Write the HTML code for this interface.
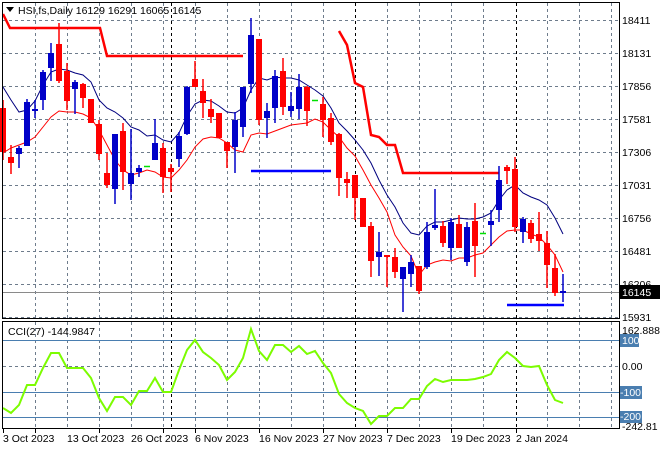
<!DOCTYPE html>
<html><head><meta charset="utf-8"><style>
body{margin:0;background:#fff;width:660px;height:450px;overflow:hidden}
svg{display:block;font-family:"Liberation Sans",sans-serif;font-size:10.5px}
</style></head><body>
<svg width="660" height="450" viewBox="0 0 660 450" xmlns="http://www.w3.org/2000/svg">
<rect width="660" height="450" fill="#fff"/>
<g stroke="#6e7c8c" stroke-width="1" stroke-dasharray="3,3" fill="none">
<path d="M3 20.5H619M3 53.5H619M3 86.5H619M3 119.5H619M3 152.5H619M3 185.5H619M3 218.5H619M3 251.5H619M3 284.5H619M3 317.5H619"/>
<path d="M35.5 3V318M67.5 3V318M99.5 3V318M131.5 3V318M163.5 3V318M195.5 3V318M227.5 3V318M259.5 3V318M291.5 3V318M323.5 3V318M387.5 3V318M419.5 3V318M451.5 3V318M483.5 3V318M547.5 3V318M579.5 3V318M611.5 3V318"/>
<path d="M35.5 322V428M67.5 322V428M99.5 322V428M131.5 322V428M163.5 322V428M195.5 322V428M227.5 322V428M259.5 322V428M291.5 322V428M323.5 322V428M387.5 322V428M419.5 322V428M451.5 322V428M483.5 322V428M547.5 322V428M579.5 322V428M611.5 322V428M3 366.5H619"/>
</g>
<g stroke="#000" stroke-dasharray="3,3"><path d="M171.5 3V318M355.5 3V318M516.5 3V318M171.5 322V428M355.5 322V428M516.5 322V428"/></g>
<path d="M3 292.5H619" stroke="#8a8a8a"/>
<g stroke="#4a7eb0"><path d="M3 340.5H619M3 392.5H619M3 417.5H619"/></g>
<polyline fill="none" stroke="#f00" stroke-width="2.5" points="3,14 10,28 100,28 107,56 243,56"/>
<polyline fill="none" stroke="#f00" stroke-width="2.5" points="339,31 347,45 355,83 363,87 371,135 379,137 387,145 395,145 403,173 499,173"/>
<path d="M251 171H331M507 305H564" stroke="#00f" stroke-width="2.5"/>
<polyline fill="none" stroke="#00007f" stroke-width="1" points="3,87 11,100 19,112 27,110 35,101 43,85 51,72 59,69 67,70 75,73 83,75 91,82 99,100 107,108 115,112 123,118 131,127 139,130 147,136 155,135 163,140 171,142 179,133 187,116 195,104 203,100 211,101 219,106 227,112 235,113 243,108 251,90 259,78 267,80 275,77 283,78 291,78 299,80 307,85 315,90 323,96 331,108 339,123 347,131 355,140 363,150 371,163 379,180 387,195 395,207 403,223 411,233 419,235 427,226 435,222 443,222 451,220 459,218 467,219 475,219 483,217 491,213 499,200 507,190 515,185 523,193 531,197 539,200 547,205 555,218 563,234"/>
<polyline fill="none" stroke="#f00" stroke-width="1" points="3,153 11,148 19,145 27,142 35,137 43,127 51,117 59,111 67,112 75,112 83,114 91,118 99,130 107,145 115,160 123,170 131,175 139,173 147,170 155,172 163,177 171,178 179,170 187,160 195,147 203,139 211,137 219,138 227,143 235,150 243,152 251,135 259,133 267,134 275,131 283,128 291,125 299,124 307,123 315,119 323,122 331,130 339,137 347,148 355,156 363,170 371,185 379,198 387,212 395,235 403,247 411,256 419,275 427,265 435,262 443,260 451,261 459,258 467,258 475,255 483,253 491,245 499,237 507,231 515,230 523,230 531,234 539,237 547,245 555,255 563,272"/>
<!-- red candles -->
<path stroke="#f00" stroke-width="1.5" fill="none" d="M3 100V160M11 145V174M59 23V83M67 63V110M83 83V108M91 99V123M99 120V160M107 153V188M123 123V190M163 143V193M171 164V192M195 61V87M203 79V118M211 99V123M219 113V138M227 142V168M259 39V125M283 58V115M307 86V126M323 97V137M331 113V145M339 133V196M347 172V198M355 175V220M363 198V227M371 222V277M387 255V287M395 248V278M419 266V294M443 221V247M459 215V248M475 203V277M507 165V184M515 157V232M531 220V243M539 212V251M547 231V288M555 254V296"/>
<path stroke="#f00" stroke-width="6" fill="none" d="M3 108V152M11 157V163M59 44V81M67 71V101M83 84V98M91 99V123M99 124V154M107 173V185M123 131V172M163 148V177M171 168V172M195 79V87M203 91V103M211 109V117M219 113V138M227 142V151M259 39V120M283 71V107M307 87V111M323 104V120M331 118V142M339 134V178M347 179V183M355 175V198M363 198V227M371 226V261M387 255V257M395 257V272M419 266V291M443 226V243M459 224V248M475 221V246M507 167V171M515 169V227M531 223V239M539 234V241M547 243V265M555 268V293"/>
<!-- blue candles -->
<path stroke="#0000c8" stroke-width="1.5" fill="none" d="M19 146V168M27 99V146M35 100V118M43 70V110M51 43V81M75 80V114M115 134V204M131 129V200M139 165V177M155 119V160M179 132V167M187 86V135M235 112V173M243 87V137M251 18V93M267 103V138M275 70V123M291 92V117M299 74V119M379 232V276M403 267V312M411 255V287M427 222V269M435 189V230M451 218V260M467 222V266M491 210V246M499 166V222M523 217V243M563 274V302"/>
<path stroke="#0000c8" stroke-width="6" fill="none" d="M19 148V154M27 102V146M35 109V111M43 72V100M51 53V68M75 82V89M115 134V189M131 173V184M139 168V172M155 143V160M179 136V159M187 87V134M235 120V147M243 87V127M251 35V84M267 111V118M275 76V108M291 106V111M299 87V109M379 252V257M403 267V279M411 262V274M427 232V267M435 225V228M451 222V248M467 227V262M491 221V225M499 180V210M523 219V232M563 291V293"/>
<path stroke="#00e000" stroke-width="1.5" d="M144 166.5H150M312 100.5H318M480 233.5H486"/>
<polyline fill="none" stroke="#7cfc00" stroke-width="2" points="3,408 11,413 19,405 27,385 35,385 43,368 51,353 59,353 67,368 75,368 83,368 91,378 99,398 107,411 115,397 123,397 131,405 139,391 147,391 155,378 163,392 171,392 179,370 187,350 195,340 203,352 211,358 219,365 227,380 235,372 243,358 251,329 259,351 267,360 275,345 283,345 291,352 299,346 307,354 315,351 323,363 331,373 339,394 347,403 355,408 363,411 371,424 379,416 387,416 395,408 403,408 411,399 419,399 427,386 435,379 443,382 451,380 459,380 467,380 475,379 483,377 491,374 499,360 507,352 515,358 523,366 531,367 539,366 547,385 555,400 563,403"/>
<rect x="2.5" y="2.5" width="617" height="316" fill="none" stroke="#000"/>
<rect x="2.5" y="321.5" width="617" height="107" fill="none" stroke="#000"/>
<g fill="#000">
<text x="622" y="24">18411</text><text x="622" y="57">18131</text><text x="622" y="90">17856</text><text x="622" y="123">17581</text><text x="622" y="156">17306</text><text x="622" y="189">17031</text><text x="622" y="222">16756</text><text x="622" y="255">16481</text><text x="622" y="288">16206</text><text x="622" y="321">15931</text>
<text x="622" y="334">162.8881</text><text x="622" y="370">0.00</text><text x="622" y="430">-242.81</text>
</g>
<rect x="620" y="285" width="40" height="14" fill="#000"/><text x="622" y="296" fill="#fff">16145</text>
<rect x="620" y="334" width="19" height="13" fill="#4a7eb0"/><text x="622" y="344" fill="#fff">100</text>
<rect x="620" y="386" width="22" height="13" fill="#4a7eb0"/><text x="620" y="396" fill="#fff">-100</text>
<rect x="620" y="411" width="22" height="12" fill="#4a7eb0"/><text x="620" y="420" fill="#fff">-200</text>
<g stroke="#000"><path d="M3.5 429V433M35.5 429V433M99.5 429V433M163.5 429V433M195.5 429V433M259.5 429V433M323.5 429V433M387.5 429V433M451.5 429V433M516.5 429V433"/></g>
<g fill="#000">
<text x="3" y="442">3 Oct 2023</text><text x="67" y="442">13 Oct 2023</text><text x="131" y="442">26 Oct 2023</text><text x="195" y="442">6 Nov 2023</text><text x="259" y="442">16 Nov 2023</text><text x="323" y="442">27 Nov 2023</text><text x="387" y="442">7 Dec 2023</text><text x="451" y="442">19 Dec 2023</text><text x="516" y="442">2 Jan 2024</text>
<text x="18" y="14">HSI,fs,Daily  16129 16291 16065 16145</text>
<text x="8" y="335">CCI(27) -144.9847</text>
</g>
<path d="M6 7h8l-4 5z" fill="#000"/>
</svg>
</body></html>
